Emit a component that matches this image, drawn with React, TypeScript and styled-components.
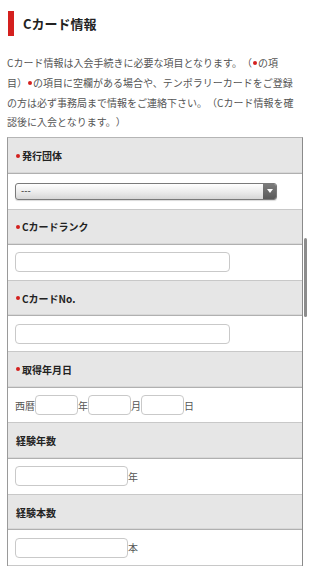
import React from "react";
import styled, { createGlobalStyle } from "styled-components";

const Global = createGlobalStyle`
  html, body { margin: 0; padding: 0; background: #fff; }
  body { font-family: "Noto Sans CJK JP", "Noto Sans", sans-serif; color: #333; text-spacing-trim: space-all; }
  * { box-sizing: border-box; }
`;

const Page = styled.div`
  width: 309px;
  padding: 11px 7px 0 7px;
`;

const Heading = styled.h2`
  margin: 0 0 0 1px;
  height: 25px;
  display: flex;
  align-items: center;
  gap: 9px;
  font-size: 13px;
  font-weight: 700;
  color: #222;
  &::before {
    content: "";
    width: 6px;
    height: 25px;
    background: #d4201e;
  }
`;

const Intro = styled.p`
  margin: 17px 0 0 0;
  font-size: 10px;
  line-height: 19.8px;
  color: #555;
  white-space: nowrap;
`;

const Dot = styled.span`
  display: inline-block;
  width: 4px;
  height: 4px;
  border-radius: 50%;
  background: #d4201e;
  vertical-align: middle;
  margin: 0 1px 2px 1px;
`;

const Table = styled.div`
  margin-top: 5px;
  width: 296px;
  border-left: 1px solid #9a9a9a;
  border-right: 1px solid #8a8a8a;
  border-top: 1px solid #b5b5b5;
  display: flex;
  flex-direction: column;
`;

const Row = styled.div<{ $head?: boolean }>`
  height: 35.67px;
  display: flex;
  align-items: center;
  padding: 0 7px 0 ${(p) => (p.$head ? "8px" : "7px")};
  background: ${(p) => (p.$head ? "#e6e6e6" : "#fff")};
  border-bottom: 1px solid ${(p) => (p.$head ? "#b0b0b0" : "#c8c8c8")};
  box-shadow: ${(p) => (p.$head ? "inset 0 -1px 0 #d8d8d8" : "none")};
`;

const Label = styled.span`
  font-size: 10px;
  font-weight: 700;
  color: #222;
  display: flex;
  align-items: center;
`;

const ReqDot = styled.span`
  width: 4px;
  height: 4px;
  border-radius: 50%;
  background: #d4201e;
  margin-right: 2px;
`;

const SelectBox = styled.div`
  width: 262px;
  height: 17px;
  display: flex;
  border: 1px solid #7a7a7a;
  border-radius: 3px;
  overflow: hidden;
  background: linear-gradient(#ffffff, #e9e9e9 60%, #d6d6d6);
  box-shadow: 0 1px 1px rgba(0,0,0,0.15);
`;

const SelectValue = styled.span`
  flex: 1;
  font-size: 9px;
  line-height: 15px;
  padding-left: 5px;
  color: #333;
  font-family: "DejaVu Sans", sans-serif;
`;

const SelectArrow = styled.span`
  width: 13px;
  display: flex;
  align-items: center;
  justify-content: center;
  background: linear-gradient(#7c7c7c, #5a5a5a);
  &::after {
    content: "";
    border-left: 3px solid transparent;
    border-right: 3px solid transparent;
    border-top: 4px solid #fff;
  }
`;

const TextInput = styled.input<{ $w: number }>`
  width: ${(p) => p.$w}px;
  height: 20px;
  border: 1px solid #c9c9c9;
  border-radius: 4px;
  background: #fff;
  padding: 0 4px;
  margin: 0;
  font-size: 11px;
  outline: none;
`;

const Unit = styled.span`
  font-size: 10px;
  color: #555;
`;

const Scroll = styled.div`
  position: fixed;
  left: 304px;
  top: 238px;
  width: 3px;
  height: 79px;
  border-radius: 2px;
  background: #8c8c8c;
`;

export default function App() {
  return (
    <Page>
      <Global />
      <Heading>Cカード情報</Heading>
      <Intro>
        Cカード情報は入会手続きに必要な項目となります。（<Dot />の項
        <br />
        目）<Dot />の項目に空欄がある場合や、テンポラリーカードをご登録
        <br />
        の方は必ず事務局まで情報をご連絡下さい。（Cカード情報を確
        <br />
        認後に入会となります。）
      </Intro>
      <Table>
        <Row $head>
          <Label><ReqDot />発行団体</Label>
        </Row>
        <Row>
          <SelectBox>
            <SelectValue>---</SelectValue>
            <SelectArrow />
          </SelectBox>
        </Row>
        <Row $head>
          <Label><ReqDot />Cカードランク</Label>
        </Row>
        <Row>
          <TextInput $w={215} />
        </Row>
        <Row $head>
          <Label><ReqDot />CカードNo.</Label>
        </Row>
        <Row>
          <TextInput $w={215} />
        </Row>
        <Row $head>
          <Label><ReqDot />取得年月日</Label>
        </Row>
        <Row>
          <Unit>西暦</Unit>
          <TextInput $w={43} />
          <Unit>年</Unit>
          <TextInput $w={43} />
          <Unit>月</Unit>
          <TextInput $w={43} />
          <Unit>日</Unit>
        </Row>
        <Row $head>
          <Label>経験年数</Label>
        </Row>
        <Row>
          <TextInput $w={113} />
          <Unit>年</Unit>
        </Row>
        <Row $head>
          <Label>経験本数</Label>
        </Row>
        <Row>
          <TextInput $w={113} />
          <Unit>本</Unit>
        </Row>
      </Table>
      <Scroll />
    </Page>
  );
}
